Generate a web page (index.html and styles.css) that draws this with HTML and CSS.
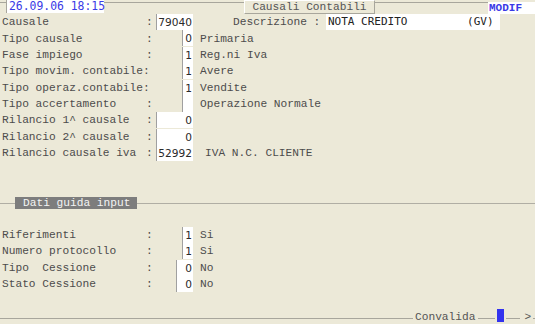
FILE: index.html
```html
<!DOCTYPE html>
<html>
<head>
<meta charset="utf-8">
<link rel="stylesheet" href="styles.css">
</head>
<body>
<div class="screen">
  <div class="topbar">
    <span class="date">26.09.06 18:15</span>
    <span class="title">Causali Contabili</span>
    <span class="modif">MODIF</span>
  </div>

  <div class="form">
    <div class="row">
      <span class="lbl">Causale</span><span class="col">:</span>
      <span class="fld"><span class="box w5">79040</span></span>
      <span class="extra"><span class="dlbl">Descrizione :</span><span class="desc">NOTA CREDITO         (GV)</span></span>
    </div>
    <div class="row">
      <span class="lbl">Tipo causale</span><span class="col">:</span>
      <span class="fld"><span class="box w1">0</span></span>
      <span class="txt">Primaria</span>
    </div>
    <div class="row">
      <span class="lbl">Fase impiego</span><span class="col">:</span>
      <span class="fld"><span class="box w1">1</span></span>
      <span class="txt">Reg.ni Iva</span>
    </div>
    <div class="row">
      <span class="lbl">Tipo movim. contabile:</span><span class="col"></span>
      <span class="fld"><span class="box w1">1</span></span>
      <span class="txt">Avere</span>
    </div>
    <div class="row">
      <span class="lbl">Tipo operaz.contabile:</span><span class="col"></span>
      <span class="fld"><span class="box w1">1</span></span>
      <span class="txt">Vendite</span>
    </div>
    <div class="row">
      <span class="lbl">Tipo accertamento</span><span class="col">:</span>
      <span class="fld"><span class="box w1"></span></span>
      <span class="txt">Operazione Normale</span>
    </div>
    <div class="row">
      <span class="lbl">Rilancio 1^ causale</span><span class="col">:</span>
      <span class="fld"><span class="box w5">0</span></span>
      <span class="txt"></span>
    </div>
    <div class="row">
      <span class="lbl">Rilancio 2^ causale</span><span class="col">:</span>
      <span class="fld"><span class="box w5">0</span></span>
      <span class="txt"></span>
    </div>
    <div class="row">
      <span class="lbl">Rilancio causale iva</span><span class="col">:</span>
      <span class="fld"><span class="box w5">52992</span></span>
      <span class="txt ind">IVA N.C. CLIENTE</span>
    </div>
  </div>

  <div class="section">
    <span class="sec-label">Dati guida input</span>
  </div>

  <div class="form lower">
    <div class="row">
      <span class="lbl">Riferimenti</span><span class="col">:</span>
      <span class="fld"><span class="box w1">1</span></span>
      <span class="txt">Si</span>
    </div>
    <div class="row">
      <span class="lbl">Numero protocollo</span><span class="col">:</span>
      <span class="fld"><span class="box w1">1</span></span>
      <span class="txt">Si</span>
    </div>
    <div class="row">
      <span class="lbl">Tipo  Cessione</span><span class="col">:</span>
      <span class="fld"><span class="box w2">0</span></span>
      <span class="txt">No</span>
    </div>
    <div class="row">
      <span class="lbl">Stato Cessione</span><span class="col">:</span>
      <span class="fld"><span class="box w2">0</span></span>
      <span class="txt">No</span>
    </div>
  </div>

  <div class="status">
    <span class="line l1"></span>
    <span class="conv">Convalida</span>
    <span class="line l2"></span>
    <span class="cursor"></span>
    <span class="line l3"></span>
    <span class="arrow">&gt;</span>
    <span class="line l4"></span>
  </div>
</div>
</body>
</html>
```
FILE: styles.css
```css
html, body {
  margin: 0;
  padding: 0;
  background: #ece9d8;
}
.screen {
  width: 535px;
  height: 324px;
  background: #ece9d8;
  color: #4c4c4c;
  font-family: "Liberation Mono", monospace;
  font-size: 11.2px;
  display: flex;
  flex-direction: column;
  overflow: hidden;
  position: relative;
}
.topbar {
  height: 14px;
  display: flex;
  align-items: flex-start;
  background: linear-gradient(to bottom, #ece9d8 0, #ece9d8 2px, #a8a69c 2px, #a8a69c 3px, #ece9d8 3px);
}
.date {
  margin-left: 6px;
  width: 98px;
  height: 13px;
  line-height: 13px;
  background: #ffffff;
  color: #3a3ae6;
  font-family: "DejaVu Sans Mono", monospace;
  font-size: 11.4px;
  padding-left: 2px;
  box-sizing: border-box;
  white-space: pre;
  border-left: 1px solid #a8a69c;
}
.title {
  margin-left: 140px;
  width: 131px;
  height: 14px;
  line-height: 13px;
  box-sizing: border-box;
  border: 1px solid #a8a69c;
  border-left-color: #ffffff;
  border-top-color: #ffffff;
  background: #ece9d8;
  text-align: center;
  color: #555555;
}
.modif {
  margin-left: auto;
  margin-top: 2px;
  width: 47px;
  height: 12px;
  line-height: 12px;
  background: #ffffff;
  color: #3a3ae6;
  font-family: "Liberation Mono", monospace;
  font-weight: bold;
  font-size: 11px;
  padding-left: 1px;
  box-sizing: border-box;
}
.form {
  display: flex;
  flex-direction: column;
}
.row {
  height: 16.375px;
  display: flex;
  align-items: center;
  white-space: pre;
}
.lbl {
  width: 146px;
  padding-left: 2px;
  box-sizing: border-box;
  flex: none;
}
.col {
  width: 10px;
  flex: none;
}
.fld {
  width: 37px;
  flex: none;
  display: flex;
  justify-content: flex-end;
  align-self: stretch;
}
.box {
  background: #ffffff;
  border-left: 1px solid #a0a0a0;
  box-sizing: border-box;
  height: 16px;
  line-height: 16px;
  text-align: right;
  padding-right: 1px;
  font-family: "DejaVu Sans", sans-serif;
  font-size: 10.6px;
  color: #2a2a2a;
}
.w5 { width: 37px; }
.w2 { width: 17px; }
.w1 { width: 11px; }
.txt {
  margin-left: 7px;
}
.txt.ind {
  margin-left: 12px;
}
.extra {
  display: flex;
  align-items: center;
  align-self: stretch;
}
.dlbl {
  margin-left: 40px;
  width: 93px;
}
.desc {
  width: 174px;
  height: 16px;
  line-height: 16px;
  background: #ffffff;
  padding-left: 2px;
  box-sizing: border-box;
  font-family: "DejaVu Sans Mono", monospace;
  font-size: 11px;
  color: #222222;
}
.section {
  margin-top: 35.6px;
  height: 12px;
  display: flex;
  align-items: center;
  background: linear-gradient(to bottom, #ece9d8 0, #ece9d8 6px, #b0aea4 6px, #b0aea4 7px, #ece9d8 7px);
}
.sec-label {
  margin-left: 15px;
  width: 122px;
  height: 12px;
  line-height: 12px;
  background: #7d7d7d;
  color: #f4f4f4;
  padding-left: 8px;
  box-sizing: border-box;
  white-space: pre;
}
.lower {
  margin-top: 17.8px;
}
.status {
  position: absolute;
  left: 0;
  right: 0;
  bottom: 0;
  height: 18px;
  display: flex;
  align-items: center;
}
.line {
  height: 1px;
  background: #a8a69c;
  align-self: flex-end;
  margin-bottom: 5px;
}
.l1 { width: 413px; }
.l2 { width: 17px; margin-left: 3px; }
.l3 { width: 14px; margin-left: 2px; }
.l4 { flex: 1; margin-left: 2px; }
.conv {
  margin-left: 2px;
  color: #555555;
  align-self: flex-end;
  line-height: 12px;
  margin-bottom: 1px;
}
.cursor {
  width: 7px;
  height: 13px;
  background: #3333ee;
  margin-left: 2px;
  align-self: flex-end;
  margin-bottom: 2px;
}
.arrow {
  margin-left: 4px;
  color: #555555;
  align-self: flex-end;
  line-height: 12px;
  margin-bottom: 1px;
}
```
